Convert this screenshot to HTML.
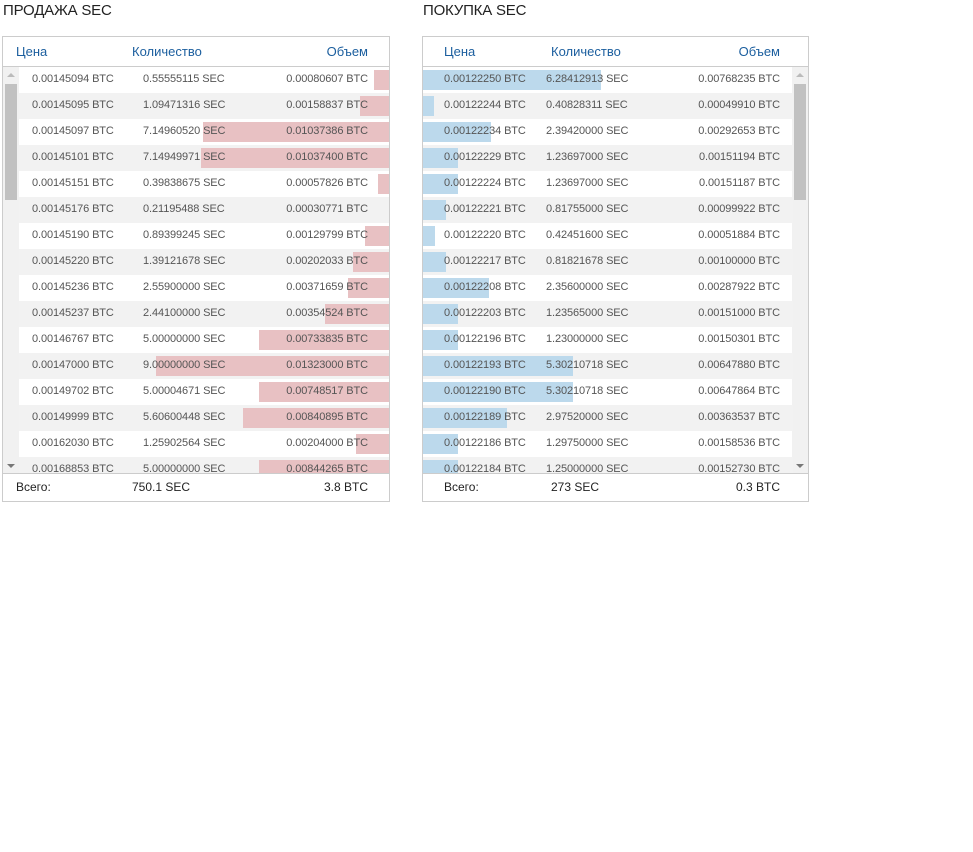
<!DOCTYPE html>
<html><head><meta charset="utf-8"><style>
*{margin:0;padding:0;box-sizing:border-box}
body{width:973px;height:852px;background:#fff;font-family:"Liberation Sans",sans-serif;position:relative;overflow:hidden}
.t{position:absolute;top:2px;font-size:15px;color:#222;letter-spacing:-0.2px}
.p{position:absolute;top:36px;width:388px;height:466px;border:1px solid #ccc}
.h{position:absolute;top:0;left:0;right:0;height:30px;border-bottom:1px solid #ccc;font-size:13px;color:#1b5e9e}
.h span{position:absolute;top:7px}
.b{position:absolute;top:30px;height:407px;overflow:hidden}
.r{position:relative;height:26px;font-size:11px;color:#555;letter-spacing:-0.1px}
.r:nth-child(even){background:#f2f2f2}
.r span{position:absolute;top:6px;white-space:nowrap}
.bar{position:absolute;top:3px;height:20px}
.sb{position:absolute;top:30px;width:16px;height:407px;background:#f1f1f1}
.th{position:absolute;left:2px;width:12px;top:17px;height:116px;background:#c1c1c1}
.au,.ad{position:absolute;left:4px;width:0;height:0;border-left:4px solid transparent;border-right:4px solid transparent}
.au{top:6px;border-bottom:4px solid #bbb}.ad{bottom:6px;border-top:4px solid #777}
.f{position:absolute;bottom:0;left:0;right:0;height:28px;border-top:1px solid #ccc;font-size:12px;color:#222}
.f span{position:absolute;top:6px}
</style></head><body>
<div class="t" style="left:3px">ПРОДАЖА SEC</div>
<div class="t" style="left:423px">ПОКУПКА SEC</div>

<div class="p" style="left:2px">
<div class="h"><span style="left:13px">Цена</span><span style="left:129px">Количество</span><span style="right:21px">Объем</span></div>
<div class="sb" style="left:0"><div class="au"></div><div class="th"></div><div class="ad"></div></div>
<div class="b" style="left:16px;width:370px">
<div class="r"><div class="bar" style="right:0;width:15px;background:#e8c1c3"></div><span style="left:13px">0.00145094 BTC</span><span style="left:124px">0.55555115 SEC</span><span style="right:21px">0.00080607 BTC</span></div>
<div class="r"><div class="bar" style="right:0;width:29px;background:#e8c1c3"></div><span style="left:13px">0.00145095 BTC</span><span style="left:124px">1.09471316 SEC</span><span style="right:21px">0.00158837 BTC</span></div>
<div class="r"><div class="bar" style="right:0;width:186px;background:#e8c1c3"></div><span style="left:13px">0.00145097 BTC</span><span style="left:124px">7.14960520 SEC</span><span style="right:21px">0.01037386 BTC</span></div>
<div class="r"><div class="bar" style="right:0;width:188px;background:#e8c1c3"></div><span style="left:13px">0.00145101 BTC</span><span style="left:124px">7.14949971 SEC</span><span style="right:21px">0.01037400 BTC</span></div>
<div class="r"><div class="bar" style="right:0;width:11px;background:#e8c1c3"></div><span style="left:13px">0.00145151 BTC</span><span style="left:124px">0.39838675 SEC</span><span style="right:21px">0.00057826 BTC</span></div>
<div class="r"><span style="left:13px">0.00145176 BTC</span><span style="left:124px">0.21195488 SEC</span><span style="right:21px">0.00030771 BTC</span></div>
<div class="r"><div class="bar" style="right:0;width:24px;background:#e8c1c3"></div><span style="left:13px">0.00145190 BTC</span><span style="left:124px">0.89399245 SEC</span><span style="right:21px">0.00129799 BTC</span></div>
<div class="r"><div class="bar" style="right:0;width:36px;background:#e8c1c3"></div><span style="left:13px">0.00145220 BTC</span><span style="left:124px">1.39121678 SEC</span><span style="right:21px">0.00202033 BTC</span></div>
<div class="r"><div class="bar" style="right:0;width:41px;background:#e8c1c3"></div><span style="left:13px">0.00145236 BTC</span><span style="left:124px">2.55900000 SEC</span><span style="right:21px">0.00371659 BTC</span></div>
<div class="r"><div class="bar" style="right:0;width:64px;background:#e8c1c3"></div><span style="left:13px">0.00145237 BTC</span><span style="left:124px">2.44100000 SEC</span><span style="right:21px">0.00354524 BTC</span></div>
<div class="r"><div class="bar" style="right:0;width:130px;background:#e8c1c3"></div><span style="left:13px">0.00146767 BTC</span><span style="left:124px">5.00000000 SEC</span><span style="right:21px">0.00733835 BTC</span></div>
<div class="r"><div class="bar" style="right:0;width:233px;background:#e8c1c3"></div><span style="left:13px">0.00147000 BTC</span><span style="left:124px">9.00000000 SEC</span><span style="right:21px">0.01323000 BTC</span></div>
<div class="r"><div class="bar" style="right:0;width:130px;background:#e8c1c3"></div><span style="left:13px">0.00149702 BTC</span><span style="left:124px">5.00004671 SEC</span><span style="right:21px">0.00748517 BTC</span></div>
<div class="r"><div class="bar" style="right:0;width:146px;background:#e8c1c3"></div><span style="left:13px">0.00149999 BTC</span><span style="left:124px">5.60600448 SEC</span><span style="right:21px">0.00840895 BTC</span></div>
<div class="r"><div class="bar" style="right:0;width:33px;background:#e8c1c3"></div><span style="left:13px">0.00162030 BTC</span><span style="left:124px">1.25902564 SEC</span><span style="right:21px">0.00204000 BTC</span></div>
<div class="r"><div class="bar" style="right:0;width:130px;background:#e8c1c3"></div><span style="left:13px">0.00168853 BTC</span><span style="left:124px">5.00000000 SEC</span><span style="right:21px">0.00844265 BTC</span></div>
</div>
<div class="f"><span style="left:13px">Всего:</span><span style="left:129px">750.1 SEC</span><span style="right:21px">3.8 BTC</span></div>
</div>

<div class="p" style="left:422px;width:387px">
<div class="h"><span style="left:21px">Цена</span><span style="left:128px">Количество</span><span style="right:28px">Объем</span></div>
<div class="sb" style="right:0"><div class="au"></div><div class="th"></div><div class="ad"></div></div>
<div class="b" style="left:0;width:370px">
<div class="r"><div class="bar" style="left:0;width:178px;background:#bcd9ec"></div><span style="left:21px">0.00122250 BTC</span><span style="left:123px">6.28412913 SEC</span><span style="right:13px">0.00768235 BTC</span></div>
<div class="r"><div class="bar" style="left:0;width:11px;background:#bcd9ec"></div><span style="left:21px">0.00122244 BTC</span><span style="left:123px">0.40828311 SEC</span><span style="right:13px">0.00049910 BTC</span></div>
<div class="r"><div class="bar" style="left:0;width:68px;background:#bcd9ec"></div><span style="left:21px">0.00122234 BTC</span><span style="left:123px">2.39420000 SEC</span><span style="right:13px">0.00292653 BTC</span></div>
<div class="r"><div class="bar" style="left:0;width:35px;background:#bcd9ec"></div><span style="left:21px">0.00122229 BTC</span><span style="left:123px">1.23697000 SEC</span><span style="right:13px">0.00151194 BTC</span></div>
<div class="r"><div class="bar" style="left:0;width:35px;background:#bcd9ec"></div><span style="left:21px">0.00122224 BTC</span><span style="left:123px">1.23697000 SEC</span><span style="right:13px">0.00151187 BTC</span></div>
<div class="r"><div class="bar" style="left:0;width:23px;background:#bcd9ec"></div><span style="left:21px">0.00122221 BTC</span><span style="left:123px">0.81755000 SEC</span><span style="right:13px">0.00099922 BTC</span></div>
<div class="r"><div class="bar" style="left:0;width:12px;background:#bcd9ec"></div><span style="left:21px">0.00122220 BTC</span><span style="left:123px">0.42451600 SEC</span><span style="right:13px">0.00051884 BTC</span></div>
<div class="r"><div class="bar" style="left:0;width:23px;background:#bcd9ec"></div><span style="left:21px">0.00122217 BTC</span><span style="left:123px">0.81821678 SEC</span><span style="right:13px">0.00100000 BTC</span></div>
<div class="r"><div class="bar" style="left:0;width:66px;background:#bcd9ec"></div><span style="left:21px">0.00122208 BTC</span><span style="left:123px">2.35600000 SEC</span><span style="right:13px">0.00287922 BTC</span></div>
<div class="r"><div class="bar" style="left:0;width:35px;background:#bcd9ec"></div><span style="left:21px">0.00122203 BTC</span><span style="left:123px">1.23565000 SEC</span><span style="right:13px">0.00151000 BTC</span></div>
<div class="r"><div class="bar" style="left:0;width:35px;background:#bcd9ec"></div><span style="left:21px">0.00122196 BTC</span><span style="left:123px">1.23000000 SEC</span><span style="right:13px">0.00150301 BTC</span></div>
<div class="r"><div class="bar" style="left:0;width:150px;background:#bcd9ec"></div><span style="left:21px">0.00122193 BTC</span><span style="left:123px">5.30210718 SEC</span><span style="right:13px">0.00647880 BTC</span></div>
<div class="r"><div class="bar" style="left:0;width:150px;background:#bcd9ec"></div><span style="left:21px">0.00122190 BTC</span><span style="left:123px">5.30210718 SEC</span><span style="right:13px">0.00647864 BTC</span></div>
<div class="r"><div class="bar" style="left:0;width:84px;background:#bcd9ec"></div><span style="left:21px">0.00122189 BTC</span><span style="left:123px">2.97520000 SEC</span><span style="right:13px">0.00363537 BTC</span></div>
<div class="r"><div class="bar" style="left:0;width:35px;background:#bcd9ec"></div><span style="left:21px">0.00122186 BTC</span><span style="left:123px">1.29750000 SEC</span><span style="right:13px">0.00158536 BTC</span></div>
<div class="r"><div class="bar" style="left:0;width:35px;background:#bcd9ec"></div><span style="left:21px">0.00122184 BTC</span><span style="left:123px">1.25000000 SEC</span><span style="right:13px">0.00152730 BTC</span></div>
</div>
<div class="f"><span style="left:21px">Всего:</span><span style="left:128px">273 SEC</span><span style="right:28px">0.3 BTC</span></div>
</div>
</body></html>
